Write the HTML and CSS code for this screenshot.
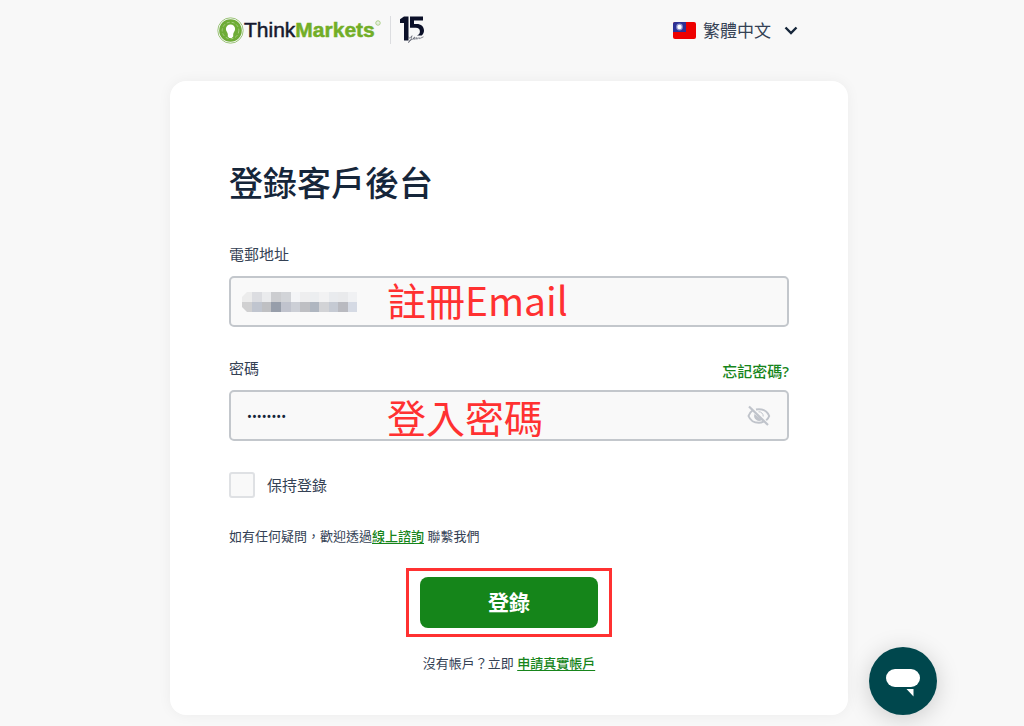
FILE: index.html
```html
<!DOCTYPE html>
<html lang="zh-Hant">
<head>
<meta charset="utf-8">
<meta name="viewport" content="width=device-width, initial-scale=1">
<title>登錄客戶後台</title>
<link rel="stylesheet" href="styles.css">
</head>
<body>
<div class="page">
  <header class="header">
    <div class="brand">
      <svg class="brand-mark" viewBox="0 0 27 27" aria-hidden="true">
        <circle cx="13.500" cy="13.500" r="12.700" fill="none" stroke="#9cc47a" stroke-width="1"/>
        <circle cx="13.500" cy="13.500" r="11.300" fill="#6eac36"/>
        <circle cx="13.500" cy="13.500" r="8.300" fill="none" stroke="#a5cc7f" stroke-width="1" stroke-dasharray="3 2"/>
        <path d="M13.500 7.500a4.600 4.600 0 0 1 4.600 4.600c0 2.400-1.900 3.300-1.900 5.200v2.200l-1.500 1.500h-2.400l-1.500-1.500v-2.200c0-1.900-1.900-2.800-1.900-5.200a4.600 4.600 0 0 1 4.600-4.600z" fill="#fff"/>
      </svg>
      <span class="brand-name">Think<b class="brand-green">Markets</b></span>
      <svg class="brand-reg" viewBox="0 0 6 6" aria-hidden="true"><circle cx="3" cy="3" r="2.200" fill="none" stroke="#a5cc7f"/><circle cx="3" cy="3" r=".6" fill="#a5cc7f"/></svg>
      <span class="brand-line"></span>
      <svg class="brand-years" viewBox="0 0 25 28" aria-hidden="true">
        <path d="M0 3.200L4 .5h4.500v24H4V7H0z" fill="#0b1028"/>
        <path d="M10 .5h13v4h-9v3.500h2.500c4.700 0 7.500 2.700 7.500 6.500 0 2-.8 3.700-2.300 4.900h-4.700c2-.7 2.900-2.200 2.900-4 0-2.300-1.500-3.600-4-3.600H10z" fill="#0b1028"/>
        <path d="M8.500 20.500q.5 3.500 3.500-.8q-.5 5-3.500 7q-.5-2.500 4.500-3.700q2.500-.8 2-2q-2 .5-1.500 2q1.500 1 3.500-1.500q-1 2.500.5 1.500l1.500-1.500q0 2 1.500.7l3-1.400" fill="none" stroke="#5a5d6a" stroke-width=".7"/>
      </svg>
    </div>
    <button class="language" type="button">
      <svg class="flag" viewBox="0 0 23 17" aria-hidden="true">
        <rect width="23" height="17" rx="2" fill="#ee0000"/>
        <path d="M2 0h11v10H0V2a2 2 0 0 1 2-2z" fill="#2d3296"/>
        <circle cx="6.500" cy="5" r="3.400" fill="#8d91cd"/>
        <circle cx="6.500" cy="5" r="2.200" fill="#fff"/>
      </svg>
      <span>繁體中文</span>
      <svg class="chevron" viewBox="0 0 14 9" aria-hidden="true"><path d="M1.500 1.500L7 7l5.500-5.500" fill="none" stroke="#16263a" stroke-width="2.400"/></svg>
    </button>
  </header>

  <main class="card">
    <h1 class="title">登錄客戶後台</h1>
    <form class="form">
      <div class="field">
        <div class="label-row"><label for="email">電郵地址</label></div>
        <div class="control">
          <input class="input" id="email" type="email">
          <svg class="masked" viewBox="0 0 115 20" aria-hidden="true">
            <path d="M5 0H10V10H0V5z" fill="#ececec"/><path d="M0 10H10V20H5L0 15z" fill="#d0d0d1"/>
            <rect x="10" width="10" height="10" fill="#dcdde1"/><rect x="10" y="10" width="10" height="10" fill="#c0c5cf"/>
            <rect x="20" width="9" height="10" fill="#eaebed"/><rect x="20" y="10" width="9" height="10" fill="#bfc0c3"/>
            <rect x="29" width="10" height="10" fill="#cccdd0"/><rect x="29" y="10" width="10" height="10" fill="#979eaa"/>
            <rect x="39" width="10" height="10" fill="#d2d4d8"/><rect x="39" y="10" width="10" height="10" fill="#c0c3cd"/>
            <rect x="49" width="9" height="10" fill="#f4f5f7"/><rect x="49" y="10" width="9" height="10" fill="#cccfd6"/>
            <rect x="58" width="10" height="10" fill="#eeeeef"/><rect x="58" y="10" width="10" height="10" fill="#bebfc3"/>
            <rect x="68" width="9" height="10" fill="#eceef0"/><rect x="68" y="10" width="9" height="10" fill="#afb6c0"/>
            <rect x="77" width="10" height="10" fill="#f2f2f3"/><rect x="77" y="10" width="10" height="10" fill="#d2d3d6"/>
            <rect x="87" width="9" height="10" fill="#e9ebee"/><rect x="87" y="10" width="9" height="10" fill="#c5cad3"/>
            <rect x="96" width="10" height="10" fill="#e9eaec"/><rect x="96" y="10" width="10" height="10" fill="#b9bac0"/>
            <rect x="106" width="9" height="10" fill="#f0f1f3"/><rect x="106" y="10" width="9" height="10" fill="#d5dae4"/>
          </svg>
          <span class="note note-email">註冊Email</span>
        </div>
      </div>
      <div class="field">
        <div class="label-row"><label for="password">密碼</label><a class="forgot" href="#">忘記密碼?</a></div>
        <div class="control">
          <input class="input input-password" id="password" type="password" value="password">
          <span class="note">登入密碼</span>
          <button class="reveal" type="button" aria-label="顯示密碼">
            <svg class="eye" viewBox="0 0 24 22" aria-hidden="true">
              <g fill="none" stroke="#c0c4cb" stroke-width="2">
                <path d="M5.500 5.500C3.500 6.800 2.200 8.700 1.500 11c1.600 4 5.600 6.800 10.300 6.800 1.800 0 3.300-.4 4.700-1.100M9 4.500c.9-.2 1.800-.3 2.800-.3 4.800 0 8.800 2.800 10.400 6.800-.6 1.700-1.600 3.100-3 4.300"/>
                <path d="M2 1.500l19 18.500" stroke-width="2.200"/>
              </g>
              <path d="M7.500 9a5 5 0 0 0 7.500 5.900z" fill="#c0c4cb"/>
              <path d="M11.500 6.800a4.300 4.300 0 0 1 4.700 4.700" fill="none" stroke="#c0c4cb" stroke-width="1"/>
            </svg>
          </button>
        </div>
      </div>
      <label class="remember"><input class="checkbox" type="checkbox"><span>保持登錄</span></label>
      <p class="help">如有任何疑問，歡迎透過<a href="#">線上諮詢</a> 聯繫我們</p>
      <div class="submit-frame"><button class="submit" type="submit">登錄</button></div>
      <p class="signup">沒有帳戶？立即 <a href="#">申請真實帳戶</a></p>
    </form>
  </main>
</div>
<button class="chat" type="button" aria-label="線上諮詢">
  <svg class="chat-icon" viewBox="0 0 34 28" aria-hidden="true"><rect width="34" height="18" rx="9" fill="#fff"/><path d="M20.500 20h7v7.500z" fill="#fff"/></svg>
</button>
</body>
</html>
```
FILE: styles.css
```css
* {
  box-sizing: border-box;
}

body {
  margin: 0;
  background: #f8f8f8;
  color: #344154;
  font-family: "Noto Sans", "Noto Sans CJK TC", sans-serif;
  font-size: 15px;
  line-height: 20px;
}

button,
input {
  font: inherit;
}

.page {
  display: flex;
  flex-direction: column;
  align-items: center;
  padding: 0 6px 11px 0;
}

.header {
  display: flex;
  justify-content: space-between;
  align-items: center;
  width: 100%;
  max-width: 584px;
  height: 60px;
  margin-bottom: 21px;
}

.brand {
  display: flex;
  align-items: center;
}

.brand-mark {
  width: 27px;
  height: 27px;
}

.brand-name {
  color: #15182d;
  font-family: "Liberation Sans", Arial, sans-serif;
  font-size: 21px;
  line-height: 28px;
  -webkit-text-stroke: 0.5px currentColor;
}

.brand-green {
  color: #72ae27;
}

.brand-reg {
  align-self: flex-start;
  width: 6px;
  height: 6px;
  margin-top: 4px;
}

.brand-line {
  width: 1px;
  height: 28px;
  margin: 0 9px;
  background: #dcdde0;
}

.brand-years {
  width: 25px;
  height: 28px;
}

.language {
  display: flex;
  align-items: center;
  gap: 7px;
  padding: 0;
  border: 0;
  background: none;
  color: #344154;
  font-family: "Noto Sans CJK TC", sans-serif;
  font-size: 17px;
  line-height: 24px;
}

.flag {
  width: 23px;
  height: 17px;
}

.chevron {
  width: 14px;
  height: 9px;
  margin: 0 3px 0 6px;
}

.card {
  width: 100%;
  max-width: 678px;
  padding: 76px 59px 42px;
  border-radius: 16px;
  background: #fff;
  box-shadow: 0 0 14px rgba(0, 0, 0, 0.05);
}

.title {
  margin: 0 0 37px;
  color: #16263a;
  font-family: "Noto Sans CJK TC", sans-serif;
  font-size: 34px;
  font-weight: 500;
  line-height: 50px;
}

.form {
  display: flex;
  flex-direction: column;
}

.field {
  margin-bottom: 31px;
}

.label-row {
  display: flex;
  justify-content: space-between;
  margin-bottom: 12px;
}

a {
  color: #17851b;
  font-weight: 500;
  text-decoration: underline;
  text-underline-offset: 2px;
}

.forgot {
  padding-top: 3px;
  margin-bottom: -3px;
  text-decoration: none;
}

.control {
  position: relative;
}

.input {
  display: block;
  width: 100%;
  height: 51px;
  padding: 0 60px 0 16px;
  border: 2px solid #c3c7cc;
  border-radius: 5px;
  background: #f9f9f9;
  color: #16263a;
}

.input-password {
  font-size: 13px;
}

.masked {
  position: absolute;
  top: 16px;
  left: 13px;
  width: 115px;
  height: 20px;
}

.note {
  position: absolute;
  top: 0;
  left: 158px;
  color: #ff3131;
  font-family: "Noto Sans CJK TC", sans-serif;
  font-size: 39px;
  line-height: 52px;
  pointer-events: none;
}

.note-email {
  top: -3px;
}

.reveal {
  position: absolute;
  top: 15px;
  right: 18px;
  width: 24px;
  height: 22px;
  padding: 0;
  border: 0;
  background: none;
}

.eye,
.chat-icon {
  display: block;
}

.remember {
  display: flex;
  align-items: center;
  gap: 12px;
  align-self: flex-start;
}

.checkbox {
  width: 26px;
  height: 26px;
  margin: 0;
  border: 2px solid #dfe1e4;
  border-radius: 3px;
  background: #f9f9f9;
  appearance: none;
}

.help,
.signup {
  margin: 0;
  font-size: 13px;
}

.help {
  margin: 28px 0 22px;
}

.submit-frame {
  align-self: center;
  padding: 6px 11px;
  border: 3px solid #ff3131;
}

.submit {
  display: block;
  width: 178px;
  height: 51px;
  padding: 0 0 3px;
  border: 0;
  border-radius: 8px;
  background: #15851a;
  color: #fff;
  font-family: "Noto Sans CJK TC", sans-serif;
  font-size: 21px;
  font-weight: 700;
}

.signup {
  margin-top: 16px;
  text-align: center;
}

.chat {
  position: fixed;
  right: 87px;
  bottom: 11px;
  display: grid;
  place-items: center;
  width: 68px;
  height: 68px;
  padding: 4px 0 0;
  border: 0;
  border-radius: 50%;
  background: #00474d;
  box-shadow: 0 4px 24px rgba(0, 0, 0, 0.18);
}

.chat-icon {
  width: 34px;
  height: 28px;
}
```
